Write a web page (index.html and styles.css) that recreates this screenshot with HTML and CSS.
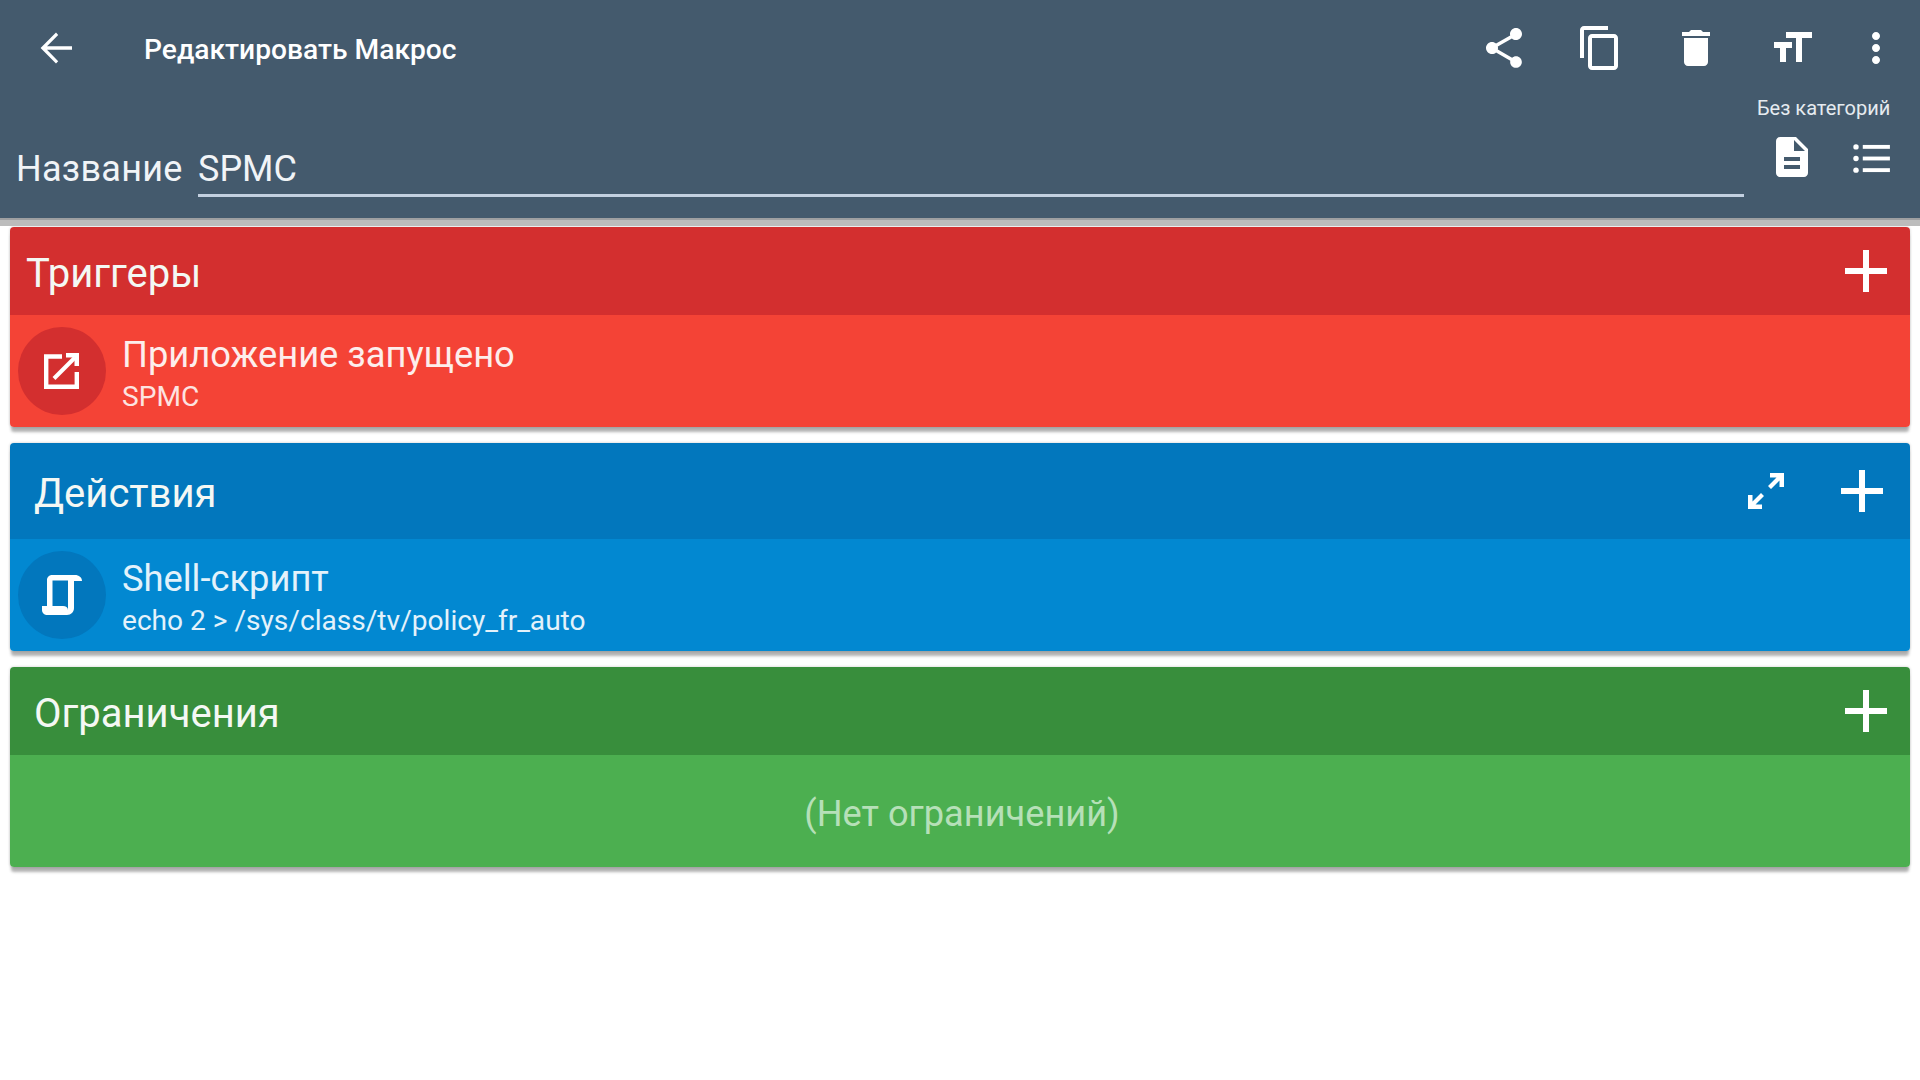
FILE: index.html
```html
<!DOCTYPE html>
<html lang="ru">

<head>
    <meta charset="UTF-8">
    <title>Редактировать Макрос</title>
    <link rel="stylesheet" href="styles.css">
</head>

<body>
    <header class="header">
        <div class="toolbar">
            <svg class="icon back" viewBox="0 0 24 24"><path d="M20 11.100H7.500l5.600-5.600L12 4.300 4.300 12l7.700 7.700 1.100-1.100-5.600-5.700H20z"/></svg>
            <div class="title">Редактировать Макрос</div>
            <svg class="icon share" viewBox="0 0 24 24"><path d="M18 16.08c-.76 0-1.44.3-1.96.77L8.91 12.7c.05-.23.09-.46.09-.7s-.04-.47-.09-.7l7.05-4.11c.54.5 1.25.81 2.04.81 1.66 0 3-1.34 3-3s-1.34-3-3-3-3 1.34-3 3c0 .24.04.47.09.7L8.04 9.81C7.5 9.31 6.79 9 6 9c-1.66 0-3 1.34-3 3s1.34 3 3 3c.79 0 1.5-.31 2.04-.81l7.12 4.16c-.05.21-.08.43-.08.65 0 1.61 1.31 2.92 2.92 2.92 1.61 0 2.92-1.31 2.92-2.92s-1.31-2.92-2.92-2.92z"/></svg>
            <svg class="icon copy" viewBox="0 0 24 24"><path d="M16 1H4c-1.1 0-2 .9-2 2v14h2V3h12V1zm3 4H8c-1.1 0-2 .9-2 2v14c0 1.1.9 2 2 2h11c1.1 0 2-.9 2-2V7c0-1.1-.9-2-2-2zm0 16H8V7h11v14z"/></svg>
            <svg class="icon trash" viewBox="0 0 24 24"><path d="M6 19c0 1.1.9 2 2 2h8c1.1 0 2-.9 2-2V7H6v12zM19 4h-3.5l-1-1h-5l-1 1H5v2h14V4z"/></svg>
            <svg class="icon size" viewBox="0 0 24 24"><path d="M9 4v3h5v12h3V7h5V4H9zm-6 8h3v7h3v-7h3V9H3v3z"/></svg>
            <svg class="icon more" viewBox="0 0 24 24"><path d="M12 8c1.1 0 2-.9 2-2s-.9-2-2-2-2 .9-2 2 .9 2 2 2zm0 2c-1.1 0-2 .9-2 2s.9 2 2 2 2-.9 2-2-.9-2-2-2zm0 6c-1.1 0-2 .9-2 2s.9 2 2 2 2-.9 2-2-.9-2-2-2z"/></svg>
        </div>
        <div class="name-row">
            <div class="name-label">Название</div>
            <div class="name-input">SPMC</div>
            <div class="category">
                <div class="category-label">Без категорий</div>
                <div class="category-icons">
                    <svg class="icon" viewBox="0 0 24 24"><path d="M14 2H6c-1.1 0-1.99.9-1.99 2L4 20c0 1.1.89 2 1.99 2H18c1.1 0 2-.9 2-2V8l-6-6zm2 16H8v-2h8v2zm0-4H8v-2h8v2zm-3-5V3.5L18.5 9H13z"/></svg>
                    <svg class="icon list" viewBox="0 0 38 32"><circle cx="3" cy="4" r="2.800"/><circle cx="3" cy="16" r="2.800"/><circle cx="3" cy="28" r="2.800"/><rect x="10" y="2" width="28" height="4"/><rect x="10" y="14" width="28" height="4"/><rect x="10" y="26" width="28" height="4"/></svg>
                </div>
            </div>
        </div>
    </header>

    <main class="content">
        <section class="card triggers">
            <div class="card-head">
                <div class="card-title">Триггеры</div>
                <svg class="add" viewBox="0 0 24 24"><path d="M19 13h-6v6h-2v-6H5v-2h6V5h2v6h6v2z"/></svg>
            </div>
            <div class="card-item">
                <div class="badge">
                    <svg class="badge-icon" viewBox="0 0 36 38"><path class="line" d="M18 4.500H2.200v30.300h30.600V20"/><path class="line thin" d="M10 26.500 31 5.500"/><path d="M22 1h13v13h-4.500V5.500H22z"/></svg>
                </div>
                <div class="item-text">
                    <div class="item-name">Приложение запущено</div>
                    <div class="item-sub">SPMC</div>
                </div>
            </div>
        </section>

        <section class="card actions">
            <div class="card-head">
                <div class="card-title">Действия</div>
                <svg class="expand" viewBox="0 0 36 36"><path d="M22 0h14v14h-4.500V7.500L23 16l-3-3 8.500-8.500H22z"/><path d="M14 36H0V22h4.500v6.500L13 20l3 3-8.500 8.500H14z"/></svg>
                <svg class="add" viewBox="0 0 24 24"><path d="M19 13h-6v6h-2v-6H5v-2h6V5h2v6h6v2z"/></svg>
            </div>
            <div class="card-item">
                <div class="badge">
                    <svg class="badge-icon script" viewBox="0 0 40 40"><path fill-rule="evenodd" d="M10 0h23c3.900 0 7 2.500 7 6h-8v27c0 3.900-3 7-7 7H5c-2.800 0-5-2.200-5-5v-4h5V5c0-2.800 2.200-5 5-5zm.5 5.500V31H21c2.800 0 5 1.500 5 4V5.500z"/></svg>
                </div>
                <div class="item-text">
                    <div class="item-name">Shell-скрипт</div>
                    <div class="item-sub">echo 2 &gt; /sys/class/tv/policy_fr_auto</div>
                </div>
            </div>
        </section>

        <section class="card limits">
            <div class="card-head">
                <div class="card-title">Ограничения</div>
                <svg class="add" viewBox="0 0 24 24"><path d="M19 13h-6v6h-2v-6H5v-2h6V5h2v6h6v2z"/></svg>
            </div>
            <div class="card-empty">(Нет ограничений)</div>
        </section>
    </main>
</body>

</html>
```

FILE: styles.css
```css
* {
    margin: 0;
    padding: 0;
    box-sizing: border-box;
}

body {
    font-family: Roboto, 'Noto Sans', sans-serif;
    background: white;
    height: 1080px;
    overflow: hidden;
}

svg {
    display: block;
    fill: white;
    flex: none;
}

.icon {
    width: 48px;
    height: 48px;
}

/* top bar */
.header {
    background: #445a6d;
    height: 218px;
    box-shadow: 0 2px 0 #9e9fa1, 0 8px 0 #bcbcbc;
    position: relative;
}

.toolbar {
    display: flex;
    align-items: center;
    height: 96px;
    padding-left: 32px;
}

.title {
    color: white;
    font-size: 28.2px;
    font-weight: 500;
    margin-left: 64px;
    padding-top: 2px;
    flex: 1;
}

.copy {
    margin-left: 48px;
}

.trash {
    margin-left: 48px;
}

.size {
    margin-left: 48px;
}

.more {
    margin-left: 36px;
    margin-right: 20px;
}

.name-row {
    display: flex;
    height: 122px;
    padding-left: 16px;
}

.name-label {
    color: #f1f4f7;
    font-size: 36px;
    line-height: 42px;
    letter-spacing: 0.3px;
    margin-top: 52px;
    width: 182px;
}

.name-input {
    color: #f1f4f7;
    font-size: 36px;
    line-height: 42px;
    width: 1546px;
    height: 101px;
    padding-top: 52px;
    border-bottom: 3px solid #c3d0e0;
}

.category {
    margin-left: 13px;
    width: 136px;
}

.category-label {
    color: #e6ebf0;
    font-size: 20px;
    line-height: 24px;
}

.category-icons {
    display: flex;
    align-items: center;
    margin-top: 13px;
    margin-left: 11px;
}

.list {
    width: 37px;
    height: 31px;
    margin-left: 37px;
    margin-top: 2px;
}

/* cards */
.content {
    display: flex;
    flex-direction: column;
    gap: 16px;
    padding: 9px 10px 0;
}

.card {
    border-radius: 4px;
    overflow: hidden;
    box-shadow: 0 6px 3px -1px rgba(0, 0, 0, 0.3), 0 0 3px rgba(0, 0, 0, 0.2);
}

.card-head {
    display: flex;
    align-items: center;
    height: 88px;
    padding-left: 24px;
    padding-right: 8px;
}

.card-title {
    color: #f4f8f4;
    font-size: 40px;
    padding-top: 5px;
    flex: 1;
}

.add {
    width: 72px;
    height: 72px;
}

.expand {
    width: 36px;
    height: 36px;
    margin-right: 42px;
}

.card-item {
    display: flex;
    align-items: center;
    height: 112px;
    padding-left: 8px;
}

.badge {
    display: flex;
    align-items: center;
    justify-content: center;
    width: 88px;
    height: 88px;
    border-radius: 50%;
}

.badge-icon {
    width: 36px;
    height: 38px;
}

.script {
    width: 40px;
    height: 40px;
}

.line {
    fill: none;
    stroke: white;
    stroke-width: 4.4;
}

.thin {
    stroke-width: 4;
}

.item-text {
    margin-left: 16px;
    margin-top: 5px;
}

.item-name {
    color: #fdeeec;
    font-size: 36.3px;
    line-height: 44px;
}

.item-sub {
    color: #fde3e0;
    font-size: 28.1px;
    line-height: 36px;
    margin-top: 2px;
}

.card-empty {
    display: flex;
    align-items: center;
    justify-content: center;
    height: 112px;
    color: #b6e0b8;
    font-size: 36.2px;
    padding-left: 4px;
    padding-top: 4px;
}

.triggers .card-head {
    background: #d32f2f;
    padding-left: 16px;
}

.triggers .card-item {
    background: #f44336;
}

.triggers .badge {
    background: #d32f2f;
}

.actions .card-head {
    background: #0277bd;
    height: 96px;
}

.actions .card-item {
    background: #0288d1;
}

.actions .badge {
    background: #0277bd;
}

.actions .add {
    margin-right: 4px;
}

.actions .item-name,
.actions .item-sub {
    color: #e3f2fb;
}

.limits .card-head {
    background: #388e3c;
}

.limits .card-empty {
    background: #4caf50;
}
```
